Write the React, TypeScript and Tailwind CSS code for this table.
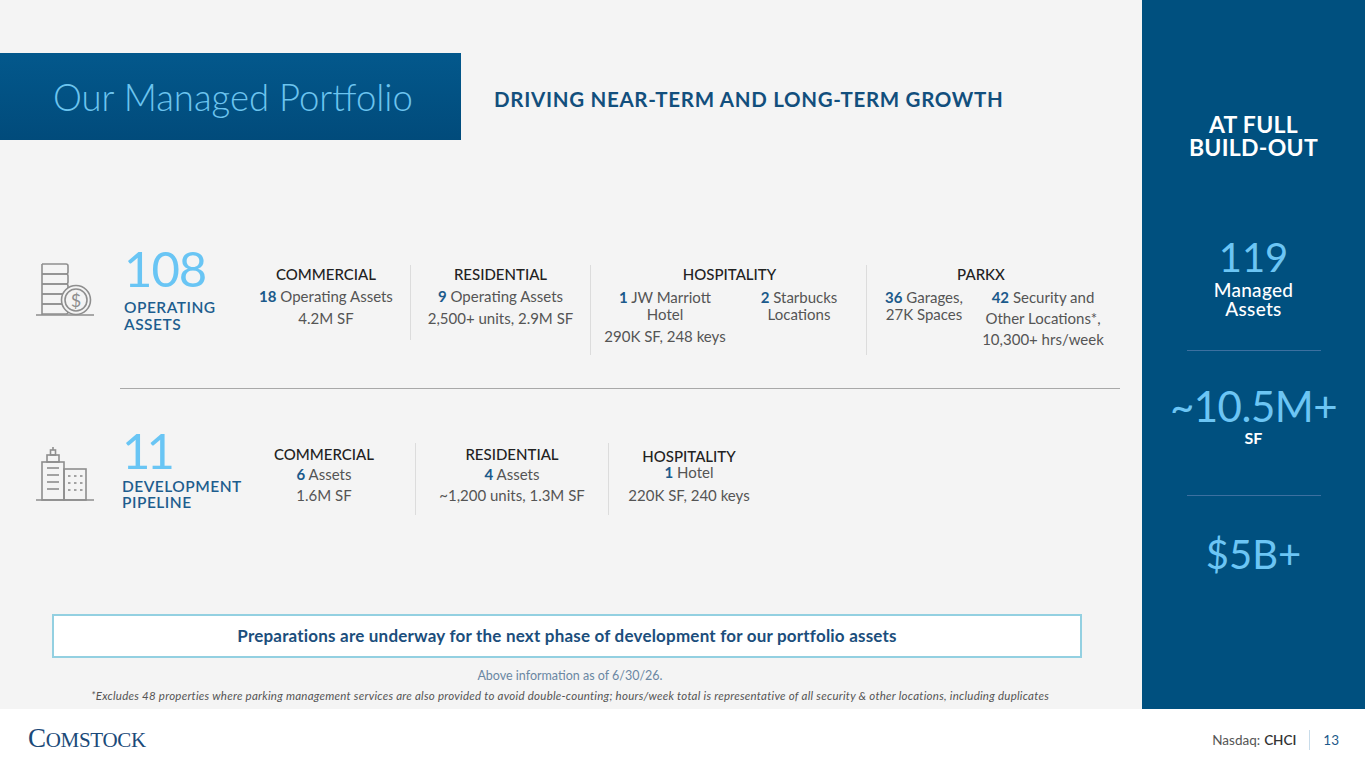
import React from "react";

function CoinStackIcon() {
  return (
    <svg width="58" height="54" viewBox="0 0 58 54" fill="none" stroke="#8e8e8e" strokeWidth="1.6">
      <path d="M6 2 H30 a2 2 0 0 1 2 2 v6 a2 2 0 0 1 -2 2 H6" />
      <path d="M6 12 H30 a2 2 0 0 1 2 2 v6 a2 2 0 0 1 -2 2 H6" />
      <path d="M6 22 H30 a2 2 0 0 1 2 2 v6 a2 2 0 0 1 -2 2 H6" />
      <path d="M6 32 H30 a2 2 0 0 1 2 2 v6 a2 2 0 0 1 -2 2 H6" />
      <path d="M6 42 H30 a2 2 0 0 1 2 2 v6 a2 2 0 0 1 -2 2 H6" />
      <line x1="6" y1="2" x2="6" y2="53" />
      <circle cx="40" cy="38" r="14.5" fill="#f4f4f4" />
      <circle cx="40" cy="38" r="11" fill="#f4f4f4" />
      <text x="40" y="44.5" textAnchor="middle" fontSize="18" fill="#8e8e8e" stroke="none" fontFamily="Lato, sans-serif">$</text>
      <line x1="0" y1="53" x2="58" y2="53" />
    </svg>
  );
}

function BuildingsIcon() {
  return (
    <svg width="58" height="54" viewBox="0 0 58 54" fill="none" stroke="#8e8e8e" strokeWidth="1.6">
      <line x1="0" y1="53" x2="58" y2="53" />
      <rect x="6" y="15" width="22" height="38" />
      <rect x="11" y="8" width="12" height="7" />
      <rect x="14.5" y="3" width="5" height="5" />
      <line x1="17" y1="0" x2="17" y2="3" />
      <line x1="11" y1="21" x2="23" y2="21" />
      <line x1="11" y1="28" x2="23" y2="28" />
      <line x1="11" y1="35" x2="23" y2="35" />
      <line x1="11" y1="42" x2="23" y2="42" />
      <rect x="28" y="22" width="22" height="31" />
      {[29, 36, 43].map((y) =>
        [32, 38, 44].map((x) => <line key={`${x}-${y}`} x1={x} y1={y} x2={x + 2.5} y2={y} />)
      )}
    </svg>
  );
}

const B = ({ children }: { children: React.ReactNode }) => (
  <span className="font-bold text-[#1b5a8b]">{children}</span>
);

export default function App() {
  return (
    <div className="w-[1365px] h-[768px] flex flex-col bg-white overflow-hidden [font-family:Lato,sans-serif]">
      <div className="flex h-[709px]">
        {/* main */}
        <div className="w-[1142px] bg-[#f4f4f4] flex flex-col pt-[53px]">
          <div className="flex items-center h-[87px]">
            <div className="w-[461px] h-full bg-linear-to-b from-[#03588c] to-[#014b7b] flex items-center pl-[53px]">
              <span className="text-[36.5px] font-light text-[#6cc4ef] leading-none mt-[2px]">Our Managed Portfolio</span>
            </div>
            <span className="ml-[33px] text-[20.5px] font-bold tracking-[0.7px] text-[#124f7d] mt-[6px]">
              DRIVING NEAR-TERM AND LONG-TERM GROWTH
            </span>
          </div>

          {/* Row 1 */}
          <div className="flex items-start mt-[106px]">
            <div className="w-[124px] pl-[36px] pt-[16px]">
              <CoinStackIcon />
            </div>
            <div className="w-[118px] flex flex-col">
              <div className="text-[49px] leading-[44px] text-[#69c5f4] tracking-[-1px]">108</div>
              <div className="mt-[9px] text-[15.5px] font-semibold tracking-[0.5px] leading-[17px] text-[#1d5d8e]">
                OPERATING<br />ASSETS
              </div>
            </div>
            <div className="w-[168px] flex flex-col items-center pt-[17px] text-[15px] text-[#555] leading-[22px]">
              <div className="font-medium text-[#222]">COMMERCIAL</div>
              <div><B>18</B> Operating Assets</div>
              <div>4.2M SF</div>
            </div>
            <div className="w-px h-[75px] mt-[19px] bg-[#dcdcdc]" />
            <div className="w-[179px] flex flex-col items-center pt-[17px] text-[15px] text-[#555] leading-[22px]">
              <div className="font-medium text-[#222]">RESIDENTIAL</div>
              <div><B>9</B> Operating Assets</div>
              <div>2,500+ units, 2.9M SF</div>
            </div>
            <div className="w-px h-[90px] mt-[19px] bg-[#dcdcdc]" />
            <div className="w-[275px] flex flex-col pt-[17px] text-[15px] text-[#555]">
              <div className="leading-[22px] font-medium text-[#222] text-center pl-[2px]">HOSPITALITY</div>
              <div className="flex">
                <div className="w-[148px] flex flex-col items-center">
                  <div className="mt-[4px] leading-[17px] text-center">
                    <B>1</B> JW Marriott<br />Hotel
                  </div>
                  <div className="mt-[3px] leading-[20px]">290K SF, 248 keys</div>
                </div>
                <div className="w-[120px] mt-[4px] leading-[17px] text-center">
                  <B>2</B> Starbucks<br />Locations
                </div>
              </div>
            </div>
            <div className="w-px h-[90px] mt-[19px] bg-[#dcdcdc]" />
            <div className="w-[252px] flex flex-col pt-[17px] text-[15px] text-[#555]">
              <div className="leading-[22px] font-medium text-[#222] w-[228px] text-center">PARKX</div>
              <div className="flex">
                <div className="w-[114px] mt-[4px] leading-[17px] text-center">
                  <B>36</B> Garages,<br />27K Spaces
                </div>
                <div className="w-[124px] mt-[2px] leading-[21px] text-center">
                  <B>42</B> Security and<br />Other Locations*,<br />10,300+ hrs/week
                </div>
              </div>
            </div>
          </div>

          <div className="ml-[120px] w-[1000px] h-px bg-[#a8a8a8] mt-[33px]" />

          {/* Row 2 */}
          <div className="flex items-start mt-[39px]">
            <div className="w-[124px] pl-[36px] pt-[19px]">
              <BuildingsIcon />
            </div>
            <div className="w-[118px] flex flex-col">
              <div className="text-[49px] leading-[44px] text-[#69c5f4] tracking-[-4px] ml-[-2px]">11</div>
              <div className="mt-[6px] text-[15.5px] font-semibold tracking-[0.5px] leading-[16px] text-[#1d5d8e] ml-[-2px]">
                DEVELOPMENT<br />PIPELINE
              </div>
            </div>
            <div className="w-[164px] flex flex-col items-center pt-[16px] text-[15px] text-[#555]">
              <div className="leading-[20px] font-medium text-[#222]">COMMERCIAL</div>
              <div className="leading-[21px]"><B>6</B> Assets</div>
              <div className="leading-[21px]">1.6M SF</div>
            </div>
            <div className="w-[9px]" />
            <div className="w-px h-[72px] mt-[15px] bg-[#dcdcdc]" />
            <div className="w-[192px] flex flex-col items-center pt-[16px] text-[15px] text-[#555]">
              <div className="leading-[20px] font-medium text-[#222]">RESIDENTIAL</div>
              <div className="leading-[21px]"><B>4</B> Assets</div>
              <div className="leading-[21px]">~1,200 units, 1.3M SF</div>
            </div>
            <div className="w-px h-[72px] mt-[15px] bg-[#dcdcdc]" />
            <div className="w-[160px] flex flex-col items-center pt-[19px] text-[15px] text-[#555]">
              <div className="leading-[18px] font-medium text-[#222]">HOSPITALITY</div>
              <div className="leading-[15px]"><B>1</B> Hotel</div>
              <div className="leading-[20px] mt-[5px]">220K SF, 240 keys</div>
            </div>
          </div>

          {/* Callout */}
          <div className="ml-[52px] w-[1030px] h-[44px] mt-[99px] border-2 border-[#93d0e1] bg-white flex items-center justify-center">
            <span className="text-[17px] font-bold tracking-[0.2px] text-[#1b4e7c]">
              Preparations are underway for the next phase of development for our portfolio assets
            </span>
          </div>
          <div className="ml-[52px] w-[1036px] text-center mt-[10px] text-[12.5px] leading-[16px] text-[#6a87a3]">
            Above information as of 6/30/26.
          </div>
          <div className="ml-[52px] w-[1036px] text-center mt-[5px] text-[11.5px] tracking-[0.25px] leading-[14px] italic text-[#555]">
            *Excludes 48 properties where parking management services are also provided to avoid double-counting; hours/week total is representative of all security &amp; other locations, including duplicates
          </div>
        </div>

        {/* right panel */}
        <div className="w-[223px] bg-[#00507f] flex flex-col items-center text-center pt-[113px]">
          <div className="text-[23px] font-bold tracking-[0.3px] leading-[23px] text-white">
            AT FULL<br />BUILD-OUT
          </div>
          <div className="mt-[78px] text-[40px] leading-[40px] text-[#6cc5f4]">119</div>
          <div className="mt-[3px] text-[19px] font-medium tracking-[0.3px] leading-[19px] text-white">
            Managed<br />Assets
          </div>
          <div className="mt-[32px] w-[134px] h-px bg-[#3c70a0]" />
          <div className="mt-[34px] text-[42px] leading-[42px] text-[#6cc5f4] tracking-[-0.5px]">~10.5M+</div>
          <div className="mt-[3px] text-[16px] font-bold leading-[16px] text-white">SF</div>
          <div className="mt-[49px] w-[134px] h-px bg-[#3c70a0]" />
          <div className="mt-[38px] text-[40px] leading-[40px] text-[#6cc5f4]">$5B+</div>
        </div>
      </div>

      {/* footer */}
      <div className="flex-1 flex items-center justify-between pl-[28px] pr-[26px]">
        <div className="[font-family:'Liberation_Serif',serif] text-[#1b4a79] leading-none flex items-baseline tracking-[-0.3px]">
          <span className="text-[27px]">C</span>
          <span className="text-[21px]">OMSTOCK</span>
        </div>
        <div className="flex items-center text-[13.5px] mt-[3px]">
          <span className="text-[#555]">Nasdaq: </span>
          <span className="text-[#333] font-semibold ml-[4px]">CHCI</span>
          <div className="w-px h-[20px] bg-[#c8dcea] mx-[13px]" />
          <span className="text-[#1d5a8a]">13</span>
        </div>
      </div>
    </div>
  );
}
